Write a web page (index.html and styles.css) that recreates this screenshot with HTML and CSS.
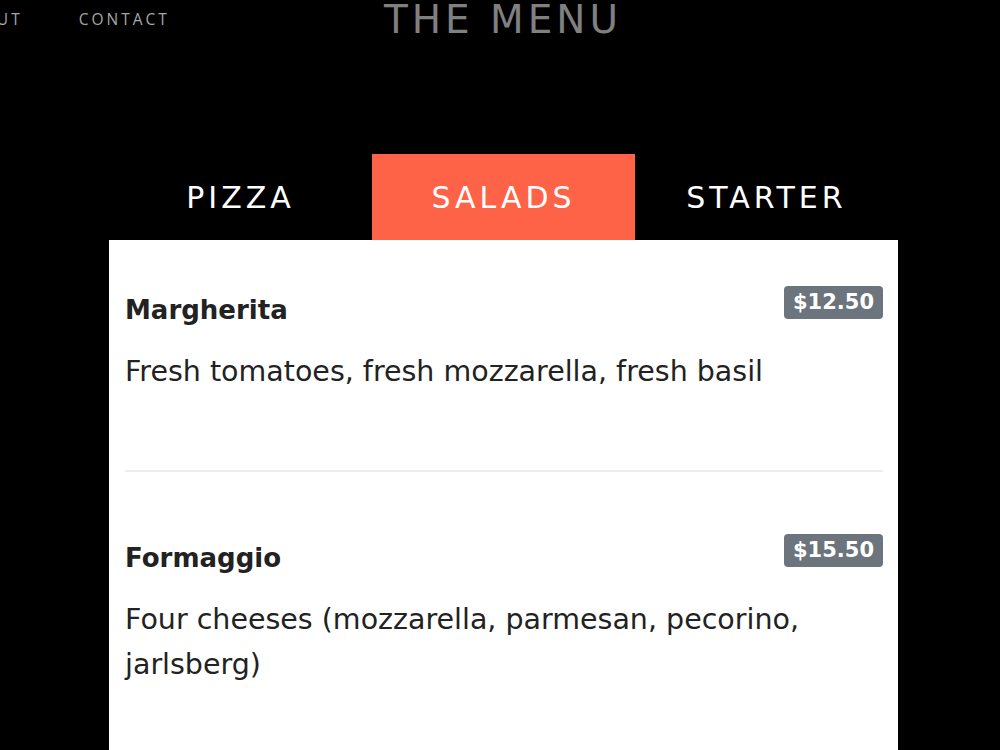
FILE: index.html
```html
<!DOCTYPE html>
<html lang="en">
<head>
    <meta charset="UTF-8">
    <meta name="viewport" content="width=device-width, initial-scale=1.0">
    <title>The Menu</title>
    <link rel="stylesheet" href="styles.css">
</head>
<body>
    <header class="top">
        <nav class="nav">
            <a href="#about">ABOUT</a>
            <a href="#contact">CONTACT</a>
        </nav>
        <h1 class="title">THE MENU</h1>
        <div></div>
    </header>

    <div class="menu">
        <div class="tabs">
            <a class="tab" href="#pizza">PIZZA</a>
            <a class="tab active" href="#salads">SALADS</a>
            <a class="tab" href="#starter">STARTER</a>
        </div>

        <div class="panel">
            <div class="item">
                <div class="item-head">
                    <h2>Margherita</h2>
                    <span class="price">$12.50</span>
                </div>
                <p>Fresh tomatoes, fresh mozzarella, fresh basil</p>
            </div>
            <hr>
            <div class="item">
                <div class="item-head">
                    <h2>Formaggio</h2>
                    <span class="price">$15.50</span>
                </div>
                <p>Four cheeses (mozzarella, parmesan, pecorino, jarlsberg)</p>
            </div>
        </div>
    </div>
</body>
</html>
```

FILE: styles.css
```css
body {
    margin: 0;
    background-color: #000;
    font-family: "Comic Sans MS", "DejaVu Sans", sans-serif;
    color: #222;
    overflow: hidden;
}
.top {
    display: grid;
    grid-template-columns: 1fr auto 1fr;
    align-items: start;
    height: 154px;
}
.nav {
    display: flex;
    gap: 56px;
    margin-left: -44px;
    padding-top: 8px;
}
.nav a {
    font-family: "Open Sans", sans-serif;
    font-size: 15.5px;
    letter-spacing: 3px;
    color: #a6a6a6;
    text-decoration: none;
}
.title {
    margin: -3px 0 0 6px;
    font-size: 39px;
    font-weight: normal;
    letter-spacing: 4px;
    color: #808080;
}
.menu {
    width: 789px;
    margin: 0 auto;
    padding-left: 7px;
}
.tabs {
    display: grid;
    grid-template-columns: repeat(3, 1fr);
}
.tab {
    height: 86px;
    display: flex;
    align-items: center;
    justify-content: center;
    color: #fff;
    font-size: 30px;
    letter-spacing: 4px;
    text-decoration: none;
}
.tab.active {
    background-color: #ff6347;
}
.panel {
    background-color: #fff;
    padding: 46px 15px 76px 16px;
}
.item-head {
    display: flex;
    justify-content: space-between;
    align-items: flex-start;
}
.item h2 {
    margin: 0;
    font-size: 26px;
    line-height: 48px;
}
.price {
    background-color: #6c757d;
    color: #fff;
    font-family: "DejaVu Sans", sans-serif;
    font-weight: bold;
    font-size: 21px;
    line-height: 25px;
    padding: 4px 9px;
    border-radius: 4px;
}
.item p {
    margin: 15px 0 0;
    font-size: 28.5px;
    line-height: 45px;
}
hr {
    border: none;
    border-top: 2px solid #eee;
    margin: 76px 0 62px;
}
```
